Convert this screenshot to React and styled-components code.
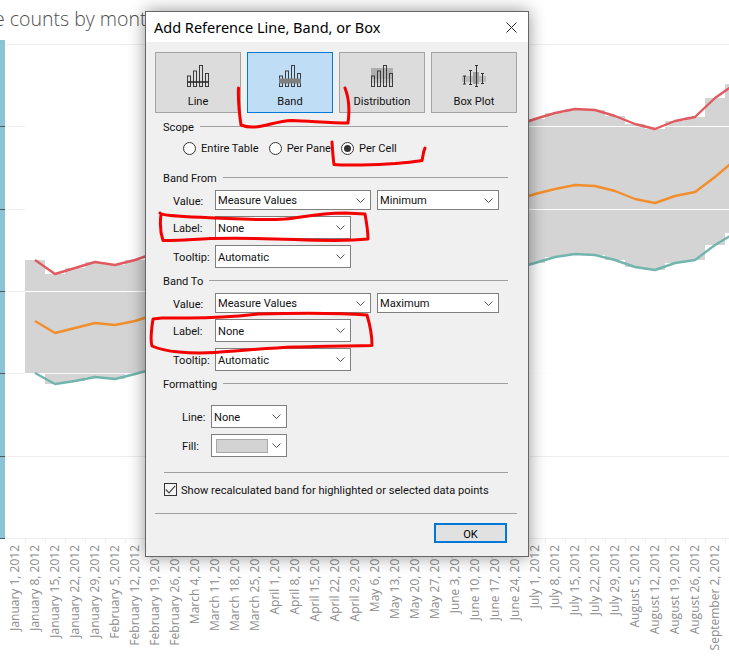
import React from "react";
import styled, { createGlobalStyle } from "styled-components";

const Global = createGlobalStyle`
  html, body { margin: 0; padding: 0; background: #fff; }
  body { font-family: "Open Sans", "Liberation Sans", sans-serif; }
`;

const Page = styled.div`
  position: relative;
  width: 729px;
  height: 658px;
  overflow: hidden;
  background: #fff;
`;
const ChartTitle = styled.div`
  height: 40px;
  margin-left: -6px;
  font-size: 19.5px;
  font-weight: 300;
  line-height: 38px;
  color: #4f4f4f;
  white-space: nowrap;
`;
const PlotSvg = styled.svg`
  display: block;
  width: 729px;
  height: 504px;
`;
const Axis = styled.div`
  display: flex;
  align-items: flex-start;
  padding-left: 5px;
  margin-top: 1px;
`;
const AxisLabel = styled.div`
  width: 20px;
  line-height: 20px;
  writing-mode: vertical-rl;
  transform: rotate(180deg);
  white-space: nowrap;
  font-family: "Open Sans", sans-serif;
  font-size: 12px;
  color: #8c8c8c;
`;
const Dialog = styled.div`
  position: absolute;
  left: 145px;
  top: 11px;
  width: 382px;
  height: 544px;
  display: flex;
  flex-direction: column;
  background: #f0f0f0;
  border: 1px solid #666;
  box-shadow: 0 0 16px rgba(0, 0, 0, 0.42);
  font-family: "Roboto", sans-serif;
  font-size: 11.1px;
  color: #111;
`;
const TitleBar = styled.div`
  flex: none;
  height: 30px;
  display: flex;
  align-items: center;
  justify-content: space-between;
  padding: 0 11px 0 8px;
  background: #fff;
  font-family: "Noto Sans", sans-serif;
  font-size: 14.5px;
  color: #000;
`;
const TypeBar = styled.div`
  display: flex;
  gap: 6px;
  margin: 10px 0 0 9px;
`;
const TypeButton = styled.div`
  box-sizing: border-box;
  width: 86px;
  height: 61px;
  display: flex;
  flex-direction: column;
  align-items: center;
  padding-top: 12px;
  background: ${(p) => (p.$active ? "#bfddf5" : "#dcdcdc")};
  border: 1px solid ${(p) => (p.$active ? "#0078d7" : "#a3a3a3")};
  svg { display: block; }
  span { margin-top: 7px; line-height: 16px; }
`;
const Caption = styled.span`
  padding-top: 2px;
`;
const SectionHead = styled.div`
  display: flex;
  align-items: center;
  gap: 6px;
  height: 16px;
  margin: ${(p) => p.$top}px 20px 0 17px;
  line-height: 16px;
`;
const Rule = styled.div`
  flex: 1;
  height: 1px;
  margin-bottom: 2px;
  background: #a0a0a0;
`;
const RadioRow = styled.div`
  display: flex;
  align-items: center;
  height: 14px;
  margin: 6px 0 0 37px;
`;
const RadioItem = styled.div`
  display: flex;
  align-items: center;
  gap: 5px;
  margin-right: 10px;
  line-height: 14px;
`;
const Radio = styled.div`
  box-sizing: border-box;
  width: 13px;
  height: 13px;
  display: flex;
  align-items: center;
  justify-content: center;
  border: 1px solid #333;
  border-radius: 50%;
  background: #fff;
  &::after {
    content: "";
    display: ${(p) => (p.$on ? "block" : "none")};
    width: 7px;
    height: 7px;
    border-radius: 50%;
    background: #333;
  }
`;
const Field = styled.div`
  display: flex;
  align-items: center;
  gap: 6px;
  margin: ${(p) => p.$top}px 0 0 ${(p) => p.$indent || 27}px;
`;
const FieldLabel = styled.div`
  flex: none;
  width: ${(p) => p.$w || 36}px;
  padding-top: 2px;
`;
const Select = styled.div`
  box-sizing: border-box;
  flex: none;
  width: ${(p) => p.$w}px;
  height: ${(p) => p.$h || 23}px;
  display: flex;
  align-items: center;
  justify-content: space-between;
  padding: 0 5px 0 2px;
  background: #fff;
  border: 1px solid #7f7f7f;
  line-height: 1;
`;
const Swatch = styled.div`
  box-sizing: border-box;
  width: 52px;
  height: 14px;
  margin-left: 2px;
  background: #d3d3d3;
  border: 1px solid #a8a8a8;
`;
const Divider = styled.div`
  height: 1px;
  margin: ${(p) => p.$top}px ${(p) => p.$right}px 0 ${(p) => p.$left}px;
  background: #a0a0a0;
`;
const CheckRow = styled.div`
  display: flex;
  align-items: center;
  gap: 4px;
  height: 13px;
  margin: 10px 0 0 18px;
`;
const CheckBox = styled.div`
  box-sizing: border-box;
  width: 13px;
  height: 13px;
  display: flex;
  align-items: center;
  justify-content: center;
  border: 1px solid #333;
  background: #f6f6f6;
`;
const ButtonRow = styled.div`
  display: flex;
  justify-content: flex-end;
  margin: 9px 21px 0 0;
`;
const OkButton = styled.div`
  box-sizing: border-box;
  width: 73px;
  height: 20px;
  display: flex;
  align-items: center;
  justify-content: center;
  background: #e1e1e1;
  border: 2px solid #0078d7;
  color: #000;
`;
const Scribbles = styled.svg`
  position: absolute;
  left: 0;
  top: 0;
  width: 729px;
  height: 658px;
  pointer-events: none;
`;

const Chevron = () => (
  <svg width="9" height="5" viewBox="0 0 9 5" fill="none" stroke="#555" strokeWidth="1">
    <path d="M0.5 0.5 L4.5 4.5 L8.5 0.5" />
  </svg>
);

const bars = [[0.5, 11], [6.5, 6], [12.5, 0.5], [18.5, 8.5]];
const Bars = () => (
  <g fill="none" stroke="#3c3c3c" strokeWidth="1">
    {bars.map(([x, y]) => (
      <rect key={x} x={x} y={y} width="3" height={21.5 - y} />
    ))}
  </g>
);
const LineIcon = () => (
  <svg width="22" height="22" viewBox="0 0 22 22">
    <Bars />
    <rect x="0" y="16.2" width="22" height="1.6" fill="#2c2c2c" />
  </svg>
);
const BandIcon = () => (
  <svg width="22" height="22" viewBox="0 0 22 22">
    <Bars />
    <rect x="0" y="13.5" width="22" height="5" fill="#7f7f7f" />
  </svg>
);
const DistIcon = () => (
  <svg width="22" height="22" viewBox="0 0 22 22">
    <rect x="0" y="3" width="22" height="11" fill="#aeaeae" />
    <rect x="0" y="14" width="22" height="4" fill="#c4c4c4" />
    <Bars />
  </svg>
);
const BoxIcon = () => (
  <svg width="24" height="22" viewBox="0 0 24 22">
    <rect x="0" y="11" width="24" height="6" fill="#bcbcbc" />
    <rect x="11" y="7" width="6" height="12" fill="#a0a0a0" />
    <g fill="none" stroke="#333" strokeWidth="1">
      <path d="M2.5 11v8M1 11h3M1 19h3" />
      <path d="M8.5 5.5v14M7 5.5h3M7 19.5h3" />
      <path d="M14.5 0.5v21M13 0.5h3M13 21.5h3" />
      <path d="M20.5 8.5v10M19 8.5h3M19 18.5h3" />
    </g>
  </svg>
);

const left = {
  x: [35, 55, 75, 95, 115, 135],
  red: [260, 274, 268, 262, 265, 260],
  org: [321, 333, 328, 323, 325, 321],
  teal: [373, 384, 381, 377, 379, 374],
};
const right = {
  x: [535, 555, 575, 595, 615, 635, 655, 675, 695, 715, 735],
  red: [119, 113, 109, 110, 116, 124, 129, 121, 117, 98, 84],
  org: [194, 189, 185, 186, 191, 199, 203, 196, 192, 177, 160],
  teal: [263, 257, 254, 255, 260, 267, 270, 263, 260, 245, 233],
};
const xs = [...left.x, ...right.x];
const series = (k) => [...left[k], ...right[k]];
const poly = (k) => xs.map((x, i) => `${x},${series(k)[i]}`).join(" ");
const stepTop = series("red").map((y, i) => `L${xs[i] - 10} ${y} L${xs[i] + 10} ${y}`).join(" ");
const stepBottom = series("teal")
  .map((y, i) => `L${xs[i] + 10} ${y} L${xs[i] - 10} ${y}`)
  .reverse()
  .join(" ");
const bandPath = `M25 373 ${stepTop} ${stepBottom} Z`;
const grid = [44, 126, 209, 291, 373, 456];

const labels = Array.from({ length: 36 }, (_, i) =>
  new Date(Date.UTC(2012, 0, 1 + 7 * i)).toLocaleDateString("en-US", {
    month: "long",
    day: "numeric",
    year: "numeric",
    timeZone: "UTC",
  })
);

const Plot = () => (
  <PlotSvg viewBox="0 40 729 504">
    <rect x="0" y="40" width="5" height="498" fill="#8cc4d6" />
    {grid.map((y) => (
      <line key={y} x1="5" x2="729" y1={y + 0.5} y2={y + 0.5} stroke="#eeeeee" />
    ))}
    <path d={bandPath} fill="#d4d4d4" />
    {grid.slice(1, 5).map((y) => (
      <line key={y} x1="25" x2="729" y1={y + 0.5} y2={y + 0.5} stroke="#fff" opacity={y === 373 ? 0.9 : 1} />
    ))}
    {[126, 209, 291, 373, 456, 538].map((y) => (
      <line key={y} x1="0" x2="5" y1={y + 0.5} y2={y + 0.5} stroke="#4a5a60" />
    ))}
    <line x1="5" x2="729" y1="538.5" y2="538.5" stroke="#eeeeee" />
    {Array.from({ length: 36 }, (_, i) => (
      <line key={i} x1={25.5 + 20 * i} x2={25.5 + 20 * i} y1="538" y2="543" stroke="#eeeeee" />
    ))}
    <g fill="none" strokeWidth="2.4" strokeLinejoin="round">
      <polyline points={poly("red")} stroke="#e15a5f" />
      <polyline points={poly("org")} stroke="#f28e2b" />
      <polyline points={poly("teal")} stroke="#72b5ae" />
    </g>
  </PlotSvg>
);

const Section = ({ title, top, children }) => (
  <>
    <SectionHead $top={top}>
      <Caption>{title}</Caption>
      <Rule />
    </SectionHead>
    {children}
  </>
);

const BandFields = ({ agg }) => (
  <>
    <Field $top={4}>
      <FieldLabel>Value:</FieldLabel>
      <Select $w={156} $h={20}><Caption>Measure Values</Caption><Chevron /></Select>
      <Select $w={122} $h={20}><Caption>{agg}</Caption><Chevron /></Select>
    </Field>
    <Field $top={6}>
      <FieldLabel>Label:</FieldLabel>
      <Select $w={136}><Caption>None</Caption><Chevron /></Select>
    </Field>
    <Field $top={6}>
      <FieldLabel>Tooltip:</FieldLabel>
      <Select $w={136}><Caption>Automatic</Caption><Chevron /></Select>
    </Field>
  </>
);

const scribbles = [
  "M238.5 88 C238 100 239.5 115 241 125 C246 127 255 127.5 262 126 C272 124 280 121 292 120.5 C310 121 330 123 348 123 C349.5 112 349 98 345 88",
  "M332 142 C332.5 150 333 158 334 164.5 C345 165.5 375 165 395 163.5 C405 162.5 415 162 422 160.5 C423 157 423 152 425 148",
  "M160 213 C162 216 185 216.5 215 218 C240 219 262 220.5 285 219 C305 217 315 213.5 345 213 L365 214 C367 225 368 232 368 239 C345 241.5 320 240.5 295 239.5 C270 238.5 240 238 210 238.5 C190 239.5 175 241 163 240.5 C160 232 160 222 161 214",
  "M162 318 L153 319 C151 332 150 340 152 346 C165 352 190 354 215 352.5 C240 351 265 348 295 347 C320 346 350 346 372 345.5 C372 335 370 325 367 315 C340 313 300 313 258 314 C240 316 220 318 190 318 L162 318",
];

export default function App() {
  return (
    <Page>
      <Global />
      <ChartTitle>e counts by month (all)</ChartTitle>
      <Plot />
      <Axis>
        {labels.map((l) => (
          <AxisLabel key={l}>{l}</AxisLabel>
        ))}
      </Axis>
      <Dialog>
        <TitleBar>
          <span>Add Reference Line, Band, or Box</span>
          <svg width="11" height="11" viewBox="0 0 11 11" stroke="#222" strokeWidth="1">
            <path d="M0.5 0.5 L10.5 10.5 M10.5 0.5 L0.5 10.5" />
          </svg>
        </TitleBar>
        <TypeBar>
          <TypeButton><LineIcon /><span>Line</span></TypeButton>
          <TypeButton $active><BandIcon /><span>Band</span></TypeButton>
          <TypeButton><DistIcon /><span>Distribution</span></TypeButton>
          <TypeButton><BoxIcon /><span>Box Plot</span></TypeButton>
        </TypeBar>
        <Section title="Scope" top={6}>
          <RadioRow>
            <RadioItem><Radio /><Caption>Entire Table</Caption></RadioItem>
            <RadioItem><Radio /><Caption>Per Pane</Caption></RadioItem>
            <RadioItem><Radio $on /><Caption>Per Cell</Caption></RadioItem>
          </RadioRow>
        </Section>
        <Section title="Band From" top={15}>
          <BandFields agg="Minimum" />
        </Section>
        <Section title="Band To" top={5}>
          <BandFields agg="Maximum" />
        </Section>
        <Section title="Formatting" top={5}>
          <Field $top={13} $indent={36}>
            <FieldLabel $w={23}>Line:</FieldLabel>
            <Select $w={76}><Caption>None</Caption><Chevron /></Select>
          </Field>
          <Field $top={6} $indent={36}>
            <FieldLabel $w={23}>Fill:</FieldLabel>
            <Select $w={76}><Swatch /><Chevron /></Select>
          </Field>
        </Section>
        <Divider $top={15} $left={18} $right={20} />
        <CheckRow>
          <CheckBox>
            <svg width="11" height="9" viewBox="0 0 11 9" fill="none" stroke="#444" strokeWidth="1.2">
              <path d="M0.8 4.5 L4 7.8 L10.2 0.8" />
            </svg>
          </CheckBox>
          <Caption>Show recalculated band for highlighted or selected data points</Caption>
        </CheckRow>
        <Divider $top={17} $left={9} $right={11} />
        <ButtonRow><OkButton><Caption>OK</Caption></OkButton></ButtonRow>
      </Dialog>
      <Scribbles viewBox="0 0 729 658" fill="none" stroke="#f40000" strokeWidth="3" strokeLinecap="round" strokeLinejoin="round">
        {scribbles.map((d) => (
          <path key={d} d={d} />
        ))}
      </Scribbles>
    </Page>
  );
}
